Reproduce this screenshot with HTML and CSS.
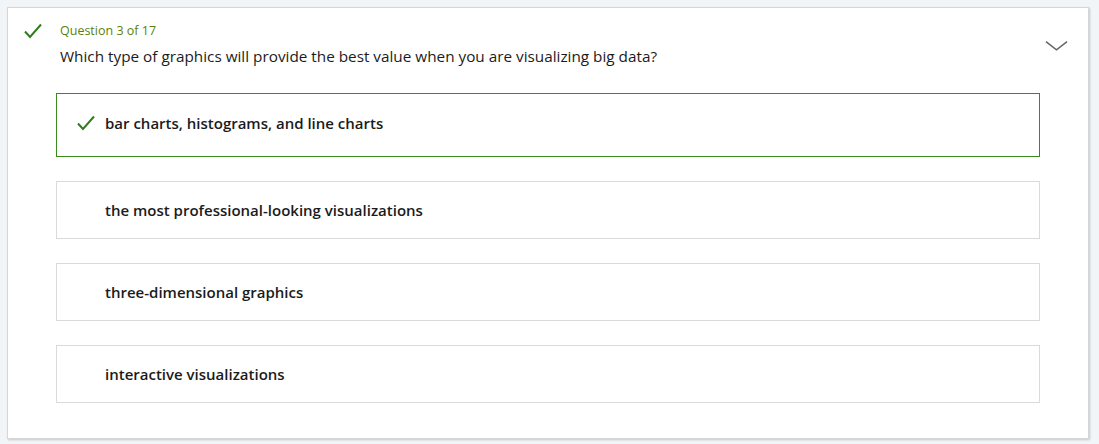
FILE: index.html
```html
<!DOCTYPE html>
<html lang="en">
<head>
<meta charset="utf-8">
<link rel="stylesheet" href="styles.css">
</head>
<body>
<div class="card">
  <div class="status">
    <svg class="check-big" viewBox="0 0 18 16" width="18" height="16"><path d="M1 8.5 L6 14 L17 1.5" fill="none" stroke="#2f7d1e" stroke-width="2"/></svg>
  </div>
  <div class="main">
    <div class="label">Question 3 of 17</div>
    <div class="question">Which type of graphics will provide the best value when you are visualizing big data?</div>
    <div class="answers">
      <div class="answer correct">
        <svg class="check-small" viewBox="0 0 18 16" width="18" height="16"><path d="M1 8.5 L6 14 L17 1.5" fill="none" stroke="#2f7d1e" stroke-width="2"/></svg>
        <span class="answer-text">bar charts, histograms, and line charts</span>
      </div>
      <div class="answer"><span class="answer-text">the most professional-looking visualizations</span></div>
      <div class="answer"><span class="answer-text">three-dimensional graphics</span></div>
      <div class="answer"><span class="answer-text">interactive visualizations</span></div>
    </div>
  </div>
  <div class="toggle">
    <svg viewBox="0 0 24 12" width="23" height="12"><path d="M1 1.5 L12 10 L23 1.5" fill="none" stroke="#666" stroke-width="1.6"/></svg>
  </div>
</div>
</body>
</html>
```
FILE: styles.css
```css
html, body {
  margin: 0;
  padding: 0;
  background: #f2f5f8;
}
body {
  padding: 7px 10px 5px 7px;
  font-family: "Open Sans", "Noto Sans", sans-serif;
  color: #1e1e1e;
}
.card {
  display: flex;
  background: #fff;
  border: 1px solid #d6d6d6;
  box-shadow: 1px 1px 2px rgba(0,0,0,0.18);
  box-sizing: border-box;
  height: 432px;
  padding: 15px 0 0 16px;
}
.status {
  width: 32px;
  flex: none;
  padding-top: 0;
}
.check-big {
  display: block;
}
.main {
  flex: 1;
  min-width: 0;
}
.label {
  font-size: 12.5px;
  line-height: 16px;
  color: #5b7f0e;
  padding-left: 4px;
}
.question {
  font-size: 15.3px;
  line-height: 20px;
  padding-left: 4px;
  margin-top: 7px;
  color: #1b1b1b;
}
.answers {
  margin-top: 27px;
  display: flex;
  flex-direction: column;
  gap: 24px;
}
.answer {
  border: 1px solid #dadada;
  height: 58px;
  box-sizing: border-box;
  display: flex;
  align-items: center;
  padding-left: 48px;
}
.answer.correct {
  border-color: #3a8a1c;
  height: 64px;
  padding-left: 20px;
  padding-bottom: 5px;
}
.check-small {
  display: block;
  margin-right: 10px;
}
.answer-text {
  font-size: 15px;
  font-weight: 600;
  color: #1b1b1b;
}
.toggle {
  width: 48px;
  flex: none;
  display: flex;
  justify-content: flex-start;
  padding-left: 5px;
  box-sizing: border-box;
  padding-top: 17px;
  align-items: flex-start;
}
.toggle svg {
  display: block;
}
```
